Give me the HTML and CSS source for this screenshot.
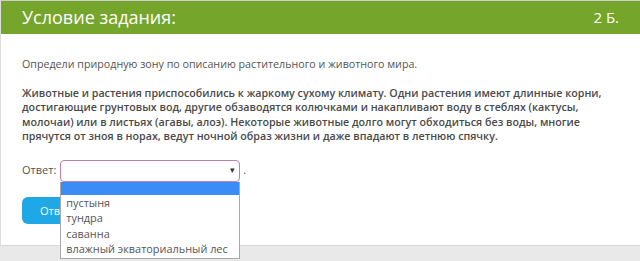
FILE: index.html
```html
<!DOCTYPE html>
<html lang="ru">
<head>
    <meta charset="UTF-8">
    <title>Условие задания</title>
<link rel="stylesheet" href="styles.css">
</head>
<body>
<div class="task-card">
    <div class="task-head">
        <h2 class="task-title">Условие задания:</h2>
        <span class="task-score">2 Б.</span>
    </div>
    <div class="task-body">
        <p class="task-question">Определи природную зону по описанию растительного и животного мира.</p>
        <p class="task-text">Животные и растения приспособились к жаркому сухому климату. Одни растения имеют длинные корни, достигающие грунтовых вод, другие обзаводятся колючками и накапливают воду в стеблях (кактусы, молочаи) или в листьях (агавы, алоэ). Некоторые животные долго могут обходиться без воды, многие прячутся от зноя в норах, ведут ночной образ жизни и даже впадают в летнюю спячку.</p>

        <div class="answer-row">
            <span class="answer-label">Ответ:</span>
            <div class="select-wrap">
                <div class="select-box"><span class="select-arrow">▾</span></div>
                <!-- opened list of options -->
                <ul class="select-list">
                    <li class="option selected">&nbsp;</li>
                    <li class="option">пустыня</li>
                    <li class="option">тундра</li>
                    <li class="option">саванна</li>
                    <li class="option">влажный экваториальный лес</li>
                </ul>
            </div>
            <span class="answer-dot">.</span>
        </div>

        <button class="btn-answer" type="button">Ответить</button>
    </div>
</div>
<div class="page-bottom"></div>
</body>
</html>
```

FILE: styles.css
```css
html {
    background-color: #e9e9e9;
}
body {
    margin: 0;
    font-family: "Open Sans", sans-serif;
    color: #555;
}

.task-card {
    background: #fff;
    border-top: 1px solid #cfcfcf;
    border-left: 1px solid #dedede;
    border-bottom: 1px solid #d6d6d6;
    height: 246px;
    box-sizing: border-box;
}
.page-bottom {
    height: 15px;
    background-color: #e9e9e9;
}

/*HEADER*/
.task-head {
    display: flex;
    justify-content: space-between;
    align-items: center;
    height: 33px;
    padding: 0 21px 0 21px;
    background-color: #76a52c;
    color: #fff;
}
.task-title {
    margin: 0;
    font-size: 18px;
    font-weight: 400;
    line-height: 33px;
}
.task-score {
    font-size: 15px;
    line-height: 33px;
}

/*BODY*/
.task-body {
    padding: 23px 21px 0;
    font-size: 10.7px;
    line-height: 14.5px;
}
.task-question {
    margin: 0 0 14px;
}
.task-text {
    margin: 0;
    font-weight: 600;
    color: #4a4a4a;
}

.answer-row {
    display: flex;
    align-items: center;
    margin-top: 16px;
}
.answer-label {
    margin-right: 4px;
    font-size: 11px;
}
.select-wrap {
    position: relative;
    z-index: 5;
}
.select-box {
    width: 180px;
    height: 22px;
    box-sizing: border-box;
    border: 1px solid #c17fa6;
    border-radius: 4px;
    display: flex;
    justify-content: flex-end;
    align-items: center;
    padding-right: 4px;
    background: #fff;
}
.select-arrow {
    font-size: 9px;
    color: #333;
}
.answer-dot {
    margin-left: 3px;
}

.select-list {
    position: absolute;
    top: 22px;
    left: 0;
    width: 180px;
    box-sizing: border-box;
    margin: 0;
    padding: 0 0 1px;
    list-style: none;
    background: #fff;
    border: 1px solid #a9a9a9;
    border-top: none;
}
.option {
    padding: 0 5px;
    height: 15.5px;
    line-height: 15.5px;
    font-size: 10.9px;
    color: #555;
    white-space: nowrap;
    overflow: hidden;
}
.option.selected {
    background-color: #3b8cf5;
    height: 13px;
}

.btn-answer {
    margin-top: 15px;
    width: 86px;
    height: 27px;
    background: #20a8e6;
    border: none;
    border-radius: 6px;
    color: #fff;
    font-family: "Open Sans", sans-serif;
    font-size: 11px;
}
```
